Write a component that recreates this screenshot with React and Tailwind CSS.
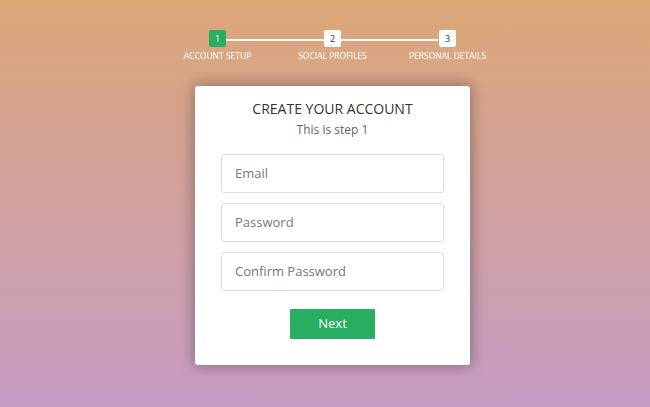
const steps = ["Account Setup", "Social Profiles", "Personal Details"];

function Stepper({ current }) {
    return (
        <div className="relative w-[345px] grid grid-cols-3">
            <div className="absolute left-[66px] right-[67px] top-[9px] h-[2px] bg-white" />
            {steps.map((label, i) => (
                <div key={label} className="relative flex flex-col items-center">
                    <div
                        className={
                            i + 1 === current
                                ? "w-[17px] h-[17px] rounded-[2px] bg-[#27ae60] text-white text-[9px] flex items-center justify-center"
                                : "w-[17px] h-[17px] rounded-[2px] bg-white text-[#333] text-[9px] flex items-center justify-center"
                        }
                    >
                        {i + 1}
                    </div>
                    <div className="mt-[3px] text-[8.5px] uppercase text-white whitespace-nowrap">
                        {label}
                    </div>
                </div>
            ))}
        </div>
    );
}

function Field({ placeholder, type }) {
    return (
        <input
            type={type}
            placeholder={placeholder}
            className="w-full h-[39px] px-[13px] border border-[#ddd] rounded-[3px] text-[13px] text-[#2c3e50] placeholder:text-[#777] outline-none"
        />
    );
}

export default function App() {
    return (
        <div
            className="w-[650px] h-[407px] overflow-hidden bg-gradient-to-b from-[#dca675] to-[#c79cc4] pl-[15px] flex flex-col items-center"
            style={{ fontFamily: '"Open Sans", "Liberation Sans", sans-serif' }}
        >
            <div className="mt-[30px]">
                <Stepper current={1} />
            </div>
            <div className="mt-[23px] w-[275px] bg-white rounded-[3px] shadow-[0_0_15px_1px_rgba(0,0,0,0.35)] px-[26px] pt-[13px] pb-[26px] flex flex-col items-center">
                <h2 className="text-[14px] leading-[20px] text-[#333] uppercase">
                    Create your account
                </h2>
                <h3 className="mt-[2px] text-[12px] leading-[18px] text-[#666]">
                    This is step 1
                </h3>
                <div className="mt-[15px] w-full flex flex-col gap-[10px]">
                    <Field placeholder="Email" type="text" />
                    <Field placeholder="Password" type="password" />
                    <Field placeholder="Confirm Password" type="password" />
                </div>
                <button
                    type="button"
                    className="mt-[18px] w-[85px] h-[30px] bg-[#27ae60] text-white text-[13px] rounded-[1px]"
                >
                    Next
                </button>
            </div>
        </div>
    );
}
